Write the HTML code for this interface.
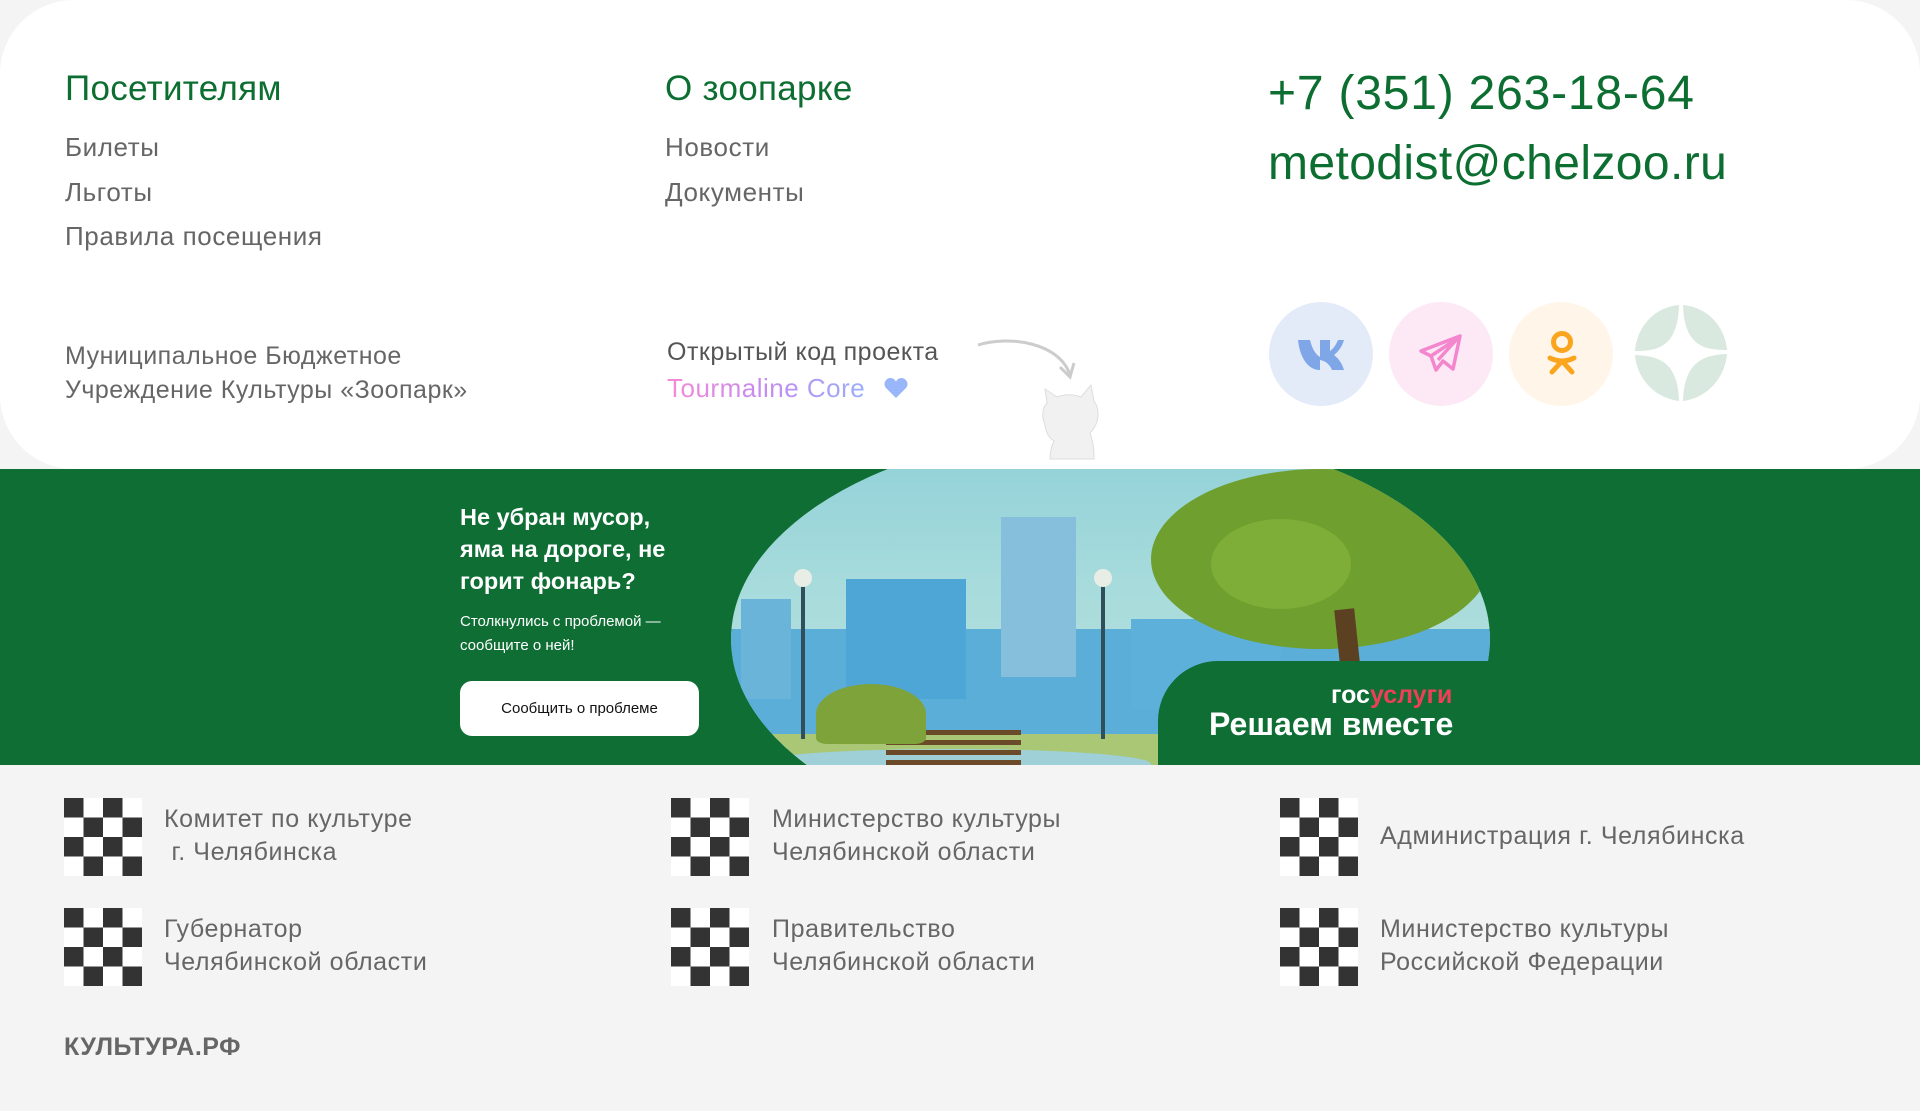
<!DOCTYPE html>
<html><head><meta charset="utf-8"><style>
*{margin:0;padding:0;box-sizing:border-box}
body{width:1920px;height:1111px;background:#f4f4f4;font-family:"Liberation Sans","DejaVu Sans",sans-serif;position:relative;overflow:hidden;color:#666}
.card{position:absolute;left:0;top:0;width:1920px;height:469px;background:#fff;border-radius:74px;z-index:2}
.a{position:absolute;white-space:nowrap}
.h{font-size:35px;color:#0d6e31;letter-spacing:0.3px}
.l{font-size:26px;color:#666;letter-spacing:0.6px}
.banner{position:absolute;left:0;top:469px;width:1920px;height:296px;background:#0e6e34;overflow:hidden}
.chk{position:absolute;width:78px;height:78px;background:
conic-gradient(#fff 0 25%,#333 0 50%,#fff 0 75%,#333 0) 0 0/39px 39px}
.bt{font-size:25px;color:#666;line-height:33px;letter-spacing:0.6px}
</style></head><body>
<div class="card">
<div class="a h" style="left:65px;top:69px">Посетителям</div>
<div class="a l" style="left:65px;top:132px">Билеты</div>
<div class="a l" style="left:65px;top:177px">Льготы</div>
<div class="a l" style="left:65px;top:221px">Правила посещения</div>
<div class="a h" style="left:665px;top:69px">О зоопарке</div>
<div class="a l" style="left:665px;top:132px">Новости</div>
<div class="a l" style="left:665px;top:177px">Документы</div>
<div class="a" style="left:1268px;top:66px;font-size:48px;color:#0d6e31;letter-spacing:0.8px">+7 (351) 263-18-64</div>
<div class="a" style="left:1268px;top:136px;font-size:48px;color:#0d6e31;letter-spacing:0.4px">metodist@chelzoo.ru</div>
<div class="a" style="left:65px;top:339px;font-size:25px;line-height:34px;color:#666;letter-spacing:0.5px">Муниципальное Бюджетное<br>Учреждение Культуры «Зоопарк»</div>
<div class="a" style="left:667px;top:338px;font-size:25px;color:#555;letter-spacing:0.5px">Открытый код проекта</div>
<div class="a" style="left:667px;top:373px;font-size:26px;letter-spacing:0.5px;background:linear-gradient(90deg,#f58ad6,#c58bf0,#98b0fb);-webkit-background-clip:text;color:transparent">Tourmaline Core</div>
<svg class="a" style="left:884px;top:378px" width="24" height="20" viewBox="0 0 26 22"><path d="M13 22L2 11C-2 6 2 0 7 0c3 0 5 2 6 4 1-2 3-4 6-4 5 0 9 6 5 11z" fill="#9ab6fb"/></svg>
<svg class="a" style="left:970px;top:335px" width="150" height="134" viewBox="0 0 150 134"><path d="M8 10C40 0 90 8 100 40" stroke="#ccc" stroke-width="3" fill="none"/><path d="M90 32l10 10 4-14" stroke="#ccc" stroke-width="3" fill="none"/><path d="M75 90c-4-10-2-18 2-22l-2-14 12 8c8-3 16-3 24 0l10-12 3 16c6 8 6 22-4 32 2 6 4 12 4 26H80c0-8 2-14 4-18-5-3-8-8-9-16z" fill="#f1f1f1" stroke="#ddd"/></svg>
<div class="a" style="left:1269px;top:302px;width:104px;height:104px;border-radius:50%;background:#e3ebf9"></div>
<svg class="a" style="left:1298px;top:340px" width="46" height="30" viewBox="0 0 46 30"><path d="M0 0h12c2 8 5 14 10 17V0h10v11c3-2 6-6 8-11h6c-2 7-6 12-10 15 4 3 8 8 10 15H34c-2-5-6-9-12-10v10C10 30 2 18 0 0z" fill="#7fa6e6"/></svg>
<div class="a" style="left:1389px;top:302px;width:104px;height:104px;border-radius:50%;background:#fde9f6"></div>
<svg class="a" style="left:1418px;top:333px" width="46" height="42" viewBox="0 0 46 42"><path d="M42 3L3 18l10 5 5 14 7-9 10 8zM13 23L40 5 20 27" stroke="#f386cd" stroke-width="3.5" fill="none" stroke-linejoin="round"/></svg>
<div class="a" style="left:1509px;top:302px;width:104px;height:104px;border-radius:50%;background:#fff5e9"></div>
<svg class="a" style="left:1545px;top:330px" width="34" height="48" viewBox="0 0 34 48"><circle cx="17" cy="12" r="8.5" stroke="#fba51f" stroke-width="5" fill="none"/><path d="M5 28q12 6 24 0M17 31L7 42M17 31l10 11" stroke="#fba51f" stroke-width="5" fill="none" stroke-linecap="round"/></svg>
<svg class="a" style="left:1634px;top:304px" width="94" height="98" viewBox="0 0 94 98"><g fill="#d9e9df"><path d="M45 1C21 3 3 22 1 47c20 0 43-2 44-46z"/><path d="M49 1c24 2 42 21 44 45-20 0-43-2-44-45z"/><path d="M1 51c2 24 20 43 44 46C44 55 21 52 1 51z"/><path d="M93 50c-2 24-20 44-44 47 1-42 24-46 44-47z"/></g></svg>
</div>
<div class="banner">
<div class="a" style="left:460px;top:32px;font-size:23.5px;font-weight:bold;color:#fff;line-height:32px">Не убран мусор,<br>яма на дороге, не<br>горит фонарь?</div>
<div class="a" style="left:460px;top:141px;font-size:15px;color:#fff;line-height:24px">Столкнулись с проблемой —<br>сообщите о ней!</div>
<div class="a" style="left:460px;top:212px;width:239px;height:55px;background:#fff;border-radius:12px;font-size:15px;color:#111;text-align:center;line-height:55px">Сообщить о проблеме</div>
<div class="a" style="left:731px;top:-40px;width:759px;height:420px;border-radius:50%/50%;overflow:hidden;clip-path:inset(40px 0 84px 0)">
<div style="position:absolute;inset:0;background:linear-gradient(180deg,#8fd0d8,#a9dcdc 40%,#bfe3e0)"></div>
<div style="position:absolute;left:0;top:200px;width:100%;height:120px;background:#5aaed8"></div>
<div style="position:absolute;left:270px;top:88px;width:75px;height:160px;background:#86bfdc"></div>
<div style="position:absolute;left:115px;top:150px;width:120px;height:120px;background:#4ea6d6"></div>
<div style="position:absolute;left:10px;top:170px;width:50px;height:100px;background:#6ab3d9"></div>
<div style="position:absolute;left:400px;top:190px;width:150px;height:90px;background:#5db0d9"></div>
<div style="position:absolute;left:0;top:305px;width:100%;height:80px;background:#a9c774"></div>
<div style="position:absolute;left:20px;top:320px;width:400px;height:30px;border-radius:50%;background:#9fd0d8"></div>
<div style="position:absolute;left:155px;top:301px;width:135px;height:40px;background:repeating-linear-gradient(#6b4a2a 0 5px,transparent 5px 10px)"></div>
<div style="position:absolute;left:85px;top:255px;width:110px;height:60px;border-radius:50% 50% 10% 10%;background:#7ea33a"></div>
<div style="position:absolute;left:420px;top:40px;width:340px;height:180px;border-radius:50%;background:#6f9f2e"></div>
<div style="position:absolute;left:480px;top:90px;width:140px;height:90px;border-radius:50%;background:#7fae38"></div>
<div style="position:absolute;left:610px;top:180px;width:20px;height:130px;background:#5b4022;transform:rotate(-6deg)"></div>
<div style="position:absolute;left:70px;top:150px;width:4px;height:160px;background:#2f4f5a"></div>
<div style="position:absolute;left:63px;top:140px;width:18px;height:18px;border-radius:50%;background:#e8eee6"></div>
<div style="position:absolute;left:370px;top:150px;width:4px;height:160px;background:#2f4f5a"></div>
<div style="position:absolute;left:363px;top:140px;width:18px;height:18px;border-radius:50%;background:#e8eee6"></div>
</div>
<div class="a" style="left:1158px;top:192px;width:340px;height:110px;background:#0e6e34;border-radius:60px 0 0 0"></div>
<div class="a" style="left:1331px;top:212px;font-size:25px;font-weight:bold;color:#fff">гос<span style="color:#ee3f58">услуги</span></div>
<div class="a" style="left:1209px;top:237px;font-size:32px;font-weight:bold;color:#fff">Решаем вместе</div>
</div>
<div class="chk" style="left:64px;top:798px"></div>
<div class="a bt" style="left:164px;top:803px">Комитет по культуре<br>&nbsp;г. Челябинска</div>
<div class="chk" style="left:671px;top:798px"></div>
<div class="a bt" style="left:772px;top:803px">Министерство культуры<br>Челябинской области</div>
<div class="chk" style="left:1280px;top:798px"></div>
<div class="a bt" style="left:1380px;top:820px">Администрация г. Челябинска</div>
<div class="chk" style="left:64px;top:908px"></div>
<div class="a bt" style="left:164px;top:913px">Губернатор<br>Челябинской области</div>
<div class="chk" style="left:671px;top:908px"></div>
<div class="a bt" style="left:772px;top:913px">Правительство<br>Челябинской области</div>
<div class="chk" style="left:1280px;top:908px"></div>
<div class="a bt" style="left:1380px;top:913px">Министерство культуры<br>Российской Федерации</div>
<div class="a" style="left:64px;top:1033px;font-size:25px;font-weight:bold;color:#666;letter-spacing:0.5px">КУЛЬТУРА.РФ</div>
</body></html>
